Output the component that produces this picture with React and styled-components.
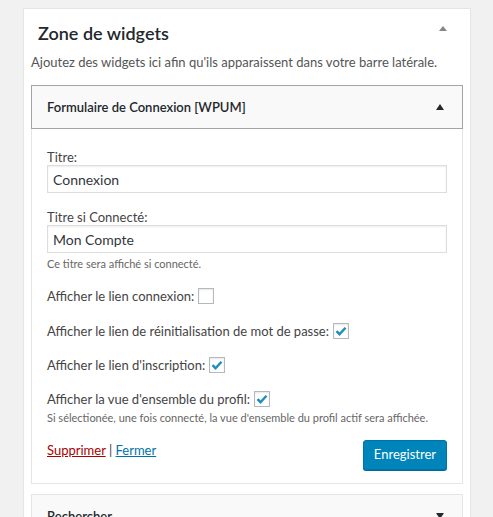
import React from "react";
import styled, { createGlobalStyle } from "styled-components";

const Global = createGlobalStyle`
  html, body { margin: 0; padding: 0; background: #f1f1f1; }
  body { font-family: Lato, "Open Sans", sans-serif; color: #444; font-size: 13px; }
  * { box-sizing: border-box; }
`;

const Page = styled.div`
  padding: 8px 0 0 23px;
  height: 517px;
  overflow: hidden;
`;

const Sidebar = styled.div`
  width: 448px;
  background: #fff;
  border: 1px solid #e5e5e5;
  border-bottom: none;
  padding: 0 7px 20px;
  min-height: 520px;
`;

const SidebarHead = styled.div`
  display: flex;
  align-items: flex-start;
  justify-content: space-between;
  padding: 12px 16px 0 7px;
`;

const SidebarTitle = styled.h2`
  margin: 0;
  font-size: 18px;
  line-height: 24px;
  font-weight: 600;
  color: #23282d;
`;

const Arrow = styled.span`
  flex: none;
  width: 0;
  height: 0;
  border-left: ${(p) => p.$w}px solid transparent;
  border-right: ${(p) => p.$w}px solid transparent;
  ${(p) =>
    p.$down
      ? `border-top: ${p.$h}px solid ${p.$color};`
      : `border-bottom: ${p.$h}px solid ${p.$color};`}
  margin-top: ${(p) => p.$offset || 0}px;
`;

const Description = styled.p`
  margin: 8px 0 14px;
  padding: 0;
  line-height: 18px;
  color: #555;
  font-size: 13px;
  white-space: nowrap;
`;

const Widget = styled.div`
  margin-bottom: 10px;
`;

const WidgetTop = styled.div`
  display: flex;
  align-items: center;
  justify-content: space-between;
  height: 44px;
  padding: 0 18px 0 15px;
  background: #f9f9f9;
  border: 1px solid ${(p) => (p.$open ? "#a0a5aa" : "#e5e5e5")};
`;

const WidgetTitle = styled.h3`
  margin: 0;
  font-size: 13px;
  font-weight: 600;
  color: #23282d;
`;

const WidgetBody = styled.div`
  background: #fff;
  border: 1px solid #e5e5e5;
  border-top: none;
  padding: 20px 15px 13px;
`;

const Label = styled.label`
  display: block;
  line-height: 16px;
  color: #444;
`;

const Input = styled.input`
  display: block;
  width: 100%;
  height: 28px;
  margin: 0;
  padding: 2px 5px;
  border: 1px solid #ddd;
  box-shadow: inset 0 1px 2px rgba(0, 0, 0, 0.07);
  font-family: inherit;
  font-size: 14px;
  color: #32373c;
  background: #fff;
  outline: none;
`;

const Field = styled.div`
  margin-top: ${(p) => p.$top || 0}px;
`;

const Hint = styled.p`
  margin: ${(p) => p.$top || 4}px 0 0;
  line-height: 14px;
  font-size: 11px;
  color: #666;
  white-space: nowrap;
`;

const CheckRow = styled.p`
  display: flex;
  align-items: center;
  margin: ${(p) => p.$top}px 0 0;
  height: 20px;
  color: #444;
`;

const Box = styled.span`
  display: inline-flex;
  align-items: center;
  justify-content: center;
  width: 16px;
  height: 16px;
  margin-left: 4px;
  border: 1px solid #b4b9be;
  background: #fff;
  box-shadow: inset 0 1px 2px rgba(0, 0, 0, 0.1);
`;

const Actions = styled.div`
  display: flex;
  justify-content: space-between;
  align-items: flex-start;
  margin-top: 15px;
`;

const Links = styled.div`
  padding-top: 1px;
  line-height: 18px;
  color: #444;
`;

const Link = styled.a`
  color: ${(p) => (p.$danger ? "#a00" : "#0073aa")};
  text-decoration: underline;
`;

const Button = styled.button`
  height: 30px;
  padding: 0 10px 2px;
  border: 1px solid #0073aa;
  border-radius: 3px;
  background: #0085ba;
  box-shadow: 0 1px 0 #006799;
  color: #fff;
  font-family: inherit;
  font-size: 13px;
  cursor: pointer;
`;

const Check = () => (
  <svg width="12" height="10" viewBox="0 0 12 10">
    <path d="M1.5 5.2 L4.5 8.2 L10.5 1.8" fill="none" stroke="#1e8cbe" strokeWidth="2.4" />
  </svg>
);

const rows = [
  { label: "Afficher le lien connexion:", checked: false, top: 15 },
  { label: "Afficher le lien de réinitialisation de mot de passe:", checked: true, top: 15 },
  { label: "Afficher le lien d'inscription:", checked: true, top: 14 },
  { label: "Afficher la vue d'ensemble du profil:", checked: true, top: 14 },
];

export default function App() {
  return (
    <>
      <Global />
      <Page>
        <Sidebar>
          <SidebarHead>
            <SidebarTitle>Zone de widgets</SidebarTitle>
            <Arrow $w={4} $h={5} $color="#82878c" $offset={5} />
          </SidebarHead>
          <Description>Ajoutez des widgets ici afin qu'ils apparaissent dans votre barre latérale.</Description>
          <Widget>
            <WidgetTop $open>
              <WidgetTitle>Formulaire de Connexion [WPUM]</WidgetTitle>
              <Arrow $w={4.5} $h={6} $color="#23282d" />
            </WidgetTop>
            <WidgetBody>
              <Field>
                <Label>Titre:</Label>
                <Input defaultValue="Connexion" />
              </Field>
              <Field $top={16}>
                <Label>Titre si Connecté:</Label>
                <Input defaultValue="Mon Compte" />
              </Field>
              <Hint>Ce titre sera affiché si connecté.</Hint>
              {rows.map((r) => (
                <CheckRow key={r.label} $top={r.top}>
                  {r.label}
                  <Box>{r.checked && <Check />}</Box>
                </CheckRow>
              ))}
              <Hint $top={2}>
                Si sélectionée, une fois connecté, la vue d'ensemble du profil actif sera affichée.
              </Hint>
              <Actions>
                <Links>
                  <Link $danger href="#">Supprimer</Link> | <Link href="#">Fermer</Link>
                </Links>
                <Button>Enregistrer</Button>
              </Actions>
            </WidgetBody>
          </Widget>
          <Widget>
            <WidgetTop>
              <WidgetTitle>Rechercher</WidgetTitle>
              <Arrow $down $w={4.5} $h={6} $color="#23282d" />
            </WidgetTop>
          </Widget>
        </Sidebar>
      </Page>
    </>
  );
}
